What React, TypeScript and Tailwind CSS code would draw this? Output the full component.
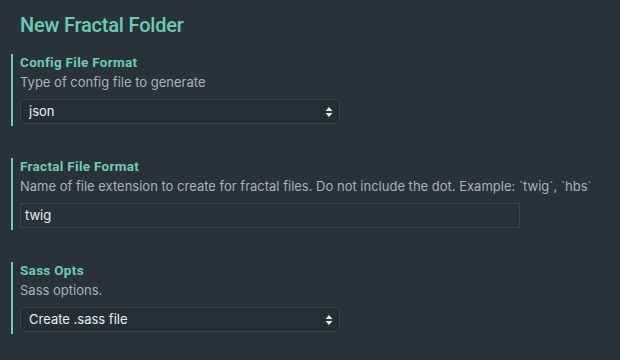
import React from 'react';

function SelectArrows() {
  return (
    <svg width="8" height="12" viewBox="0 0 8 12" className="text-[#e6eef0]">
      <path d="M4 1 L7.5 5 L0.5 5 Z" fill="currentColor" />
      <path d="M4 11 L7.5 7 L0.5 7 Z" fill="currentColor" />
    </svg>
  );
}

interface FieldProps {
  label: string;
  description: string;
  children: React.ReactNode;
}

function Field({ label, description, children }: FieldProps) {
  return (
    <div className="border-l-2 border-[#6fc9b9] pl-[7px] pb-[2px]">
      <div className="font-['Roboto',sans-serif] text-[13.5px] tracking-[0.3px] leading-4 font-bold text-[#6fc9b9]">
        {label}
      </div>
      <div className="mt-[4px] text-[13px] leading-4 text-[#a9b2b6]">{description}</div>
      <div className="mt-[9px]">{children}</div>
    </div>
  );
}

function Select({ value }: { value: string }) {
  return (
    <div className="w-[320px] h-[25px] flex items-center justify-between rounded-[4px] border border-[#3a444b] bg-[#252e34] pl-[8px] pr-[6px]">
      <span className="text-[13px] text-[#e9eef0]">{value}</span>
      <SelectArrows />
    </div>
  );
}

export default function App() {
  return (
    <div
      className="w-[620px] h-[360px] bg-[#283238] px-[11px] overflow-hidden"
      style={{ fontFamily: 'Inter, "Noto Sans", sans-serif' }}
    >
      <h1 className="pt-[11px] pl-[9px] font-['Roboto',sans-serif] text-[20px] tracking-[-0.2px] leading-7 font-medium text-[#6fc9b9]">
        New Fractal Folder
      </h1>
      <div className="mt-[15px] flex flex-col gap-[32px]">
        <Field label="Config File Format" description="Type of config file to generate">
          <Select value="json" />
        </Field>
        <Field
          label="Fractal File Format"
          description="Name of file extension to create for fractal files. Do not include the dot. Example: `twig`, `hbs`"
        >
          <div className="w-[500px] h-[25px] flex items-center border border-[#3a444b] bg-[#283238] pl-[4px]">
            <span className="text-[13px] text-[#e9eef0]">twig</span>
          </div>
        </Field>
        <Field label="Sass Opts" description="Sass options.">
          <Select value="Create .sass file" />
        </Field>
      </div>
    </div>
  );
}
